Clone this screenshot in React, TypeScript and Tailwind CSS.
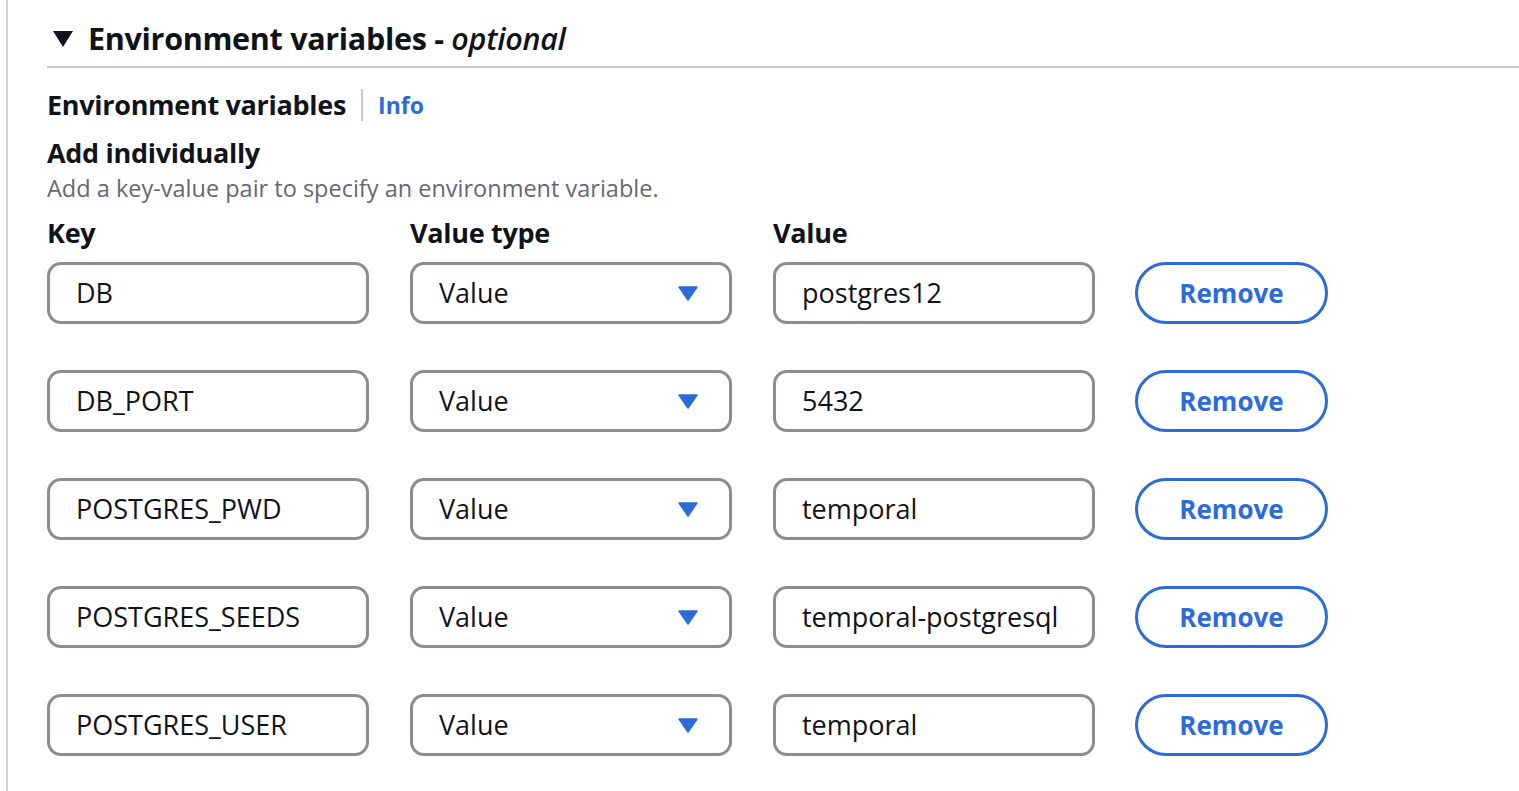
const rows = [
  { key: 'DB', value: 'postgres12' },
  { key: 'DB_PORT', value: '5432' },
  { key: 'POSTGRES_PWD', value: 'temporal' },
  { key: 'POSTGRES_SEEDS', value: 'temporal-postgresql' },
  { key: 'POSTGRES_USER', value: 'temporal' },
];

const font = { fontFamily: '"Open Sans", "Noto Sans", sans-serif' };

export default function App() {
  return (
    <div className="min-h-[791px] bg-white text-[#0f141a]" style={font}>
      <div className="ml-[6px] min-h-[791px] border-l-2 border-[#d1d1d6] pl-[39px]">
        {/* section header */}
        <div className="flex h-[68px] items-center border-b-2 border-[#c6c6cd] pt-[12px]">
          <svg width="20" height="16" viewBox="0 0 20 16" className="ml-[6px] mr-[15px]">
            <path d="M0 0 L20 0 L10 16 Z" fill="#0f141a" />
          </svg>
          <span className="text-[30.5px] font-bold tracking-[-0.3px]">
            Environment variables - <i className="font-semibold">optional</i>
          </span>
        </div>

        <div className="mt-[20px] flex h-[34px] items-center">
          <span className="text-[27px] font-bold tracking-[-0.3px]">Environment variables</span>
          <span className="mx-[15px] h-[32px] w-[2px] bg-[#c6c6cd]" />
          <span className="text-[23px] font-bold text-[#2c6bd8]">Info</span>
        </div>

        <div className="mt-[14px] text-[27px] font-bold leading-[34px] tracking-[-0.3px]">Add individually</div>
        <div className="mt-[2px] text-[23.5px] leading-[32px] text-[#656871]">
          Add a key-value pair to specify an environment variable.
        </div>

        <div className="mt-[14px] flex h-[30px] items-center text-[27px] font-bold tracking-[-0.3px]">
          <span className="w-[363px]">Key</span>
          <span className="w-[363px]">Value type</span>
          <span>Value</span>
        </div>

        <div className="mt-[14px] flex flex-col gap-[46px]">
          {rows.map((r) => (
            <div key={r.key} className="flex h-[62px] items-center">
              <div className="flex h-[62px] w-[322px] items-center rounded-[14px] border-[3px] border-[#8c8c94] pl-[26px] text-[27px]">
                {r.key}
              </div>
              <div className="ml-[41px] flex h-[62px] w-[322px] items-center justify-between rounded-[14px] border-[3px] border-[#8c8c94] pl-[26px] pr-[31px] text-[27px]">
                <span>Value</span>
                <svg width="20" height="15" viewBox="0 0 20 15">
                  <path d="M1 1 L19 1 L10 14 Z" fill="#2c6bd8" stroke="#2c6bd8" strokeWidth="1.5" strokeLinejoin="round" />
                </svg>
              </div>
              <div className="ml-[41px] flex h-[62px] w-[322px] items-center rounded-[14px] border-[3px] border-[#8c8c94] pl-[26px] text-[27px]">
                {r.value}
              </div>
              <button className="ml-[40px] flex h-[62px] w-[193px] items-center justify-center rounded-full border-[3px] border-[#2c6bd8] text-[26px] font-bold text-[#2c6bd8]">
                Remove
              </button>
            </div>
          ))}
        </div>
      </div>
    </div>
  );
}
